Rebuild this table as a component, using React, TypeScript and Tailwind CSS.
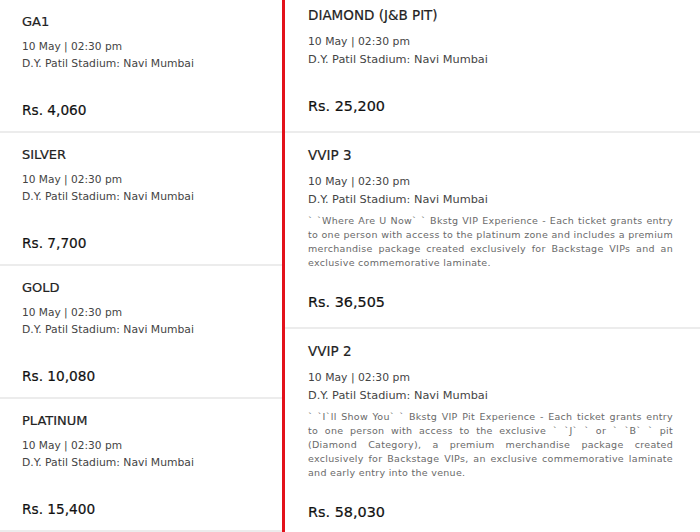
const VENUE = 'D.Y. Patil Stadium: Navi Mumbai';
const DATE = '10 May | 02:30 pm';

type Ticket = {
  name: string;
  price: string;
  lines?: string[];
};

const left: Ticket[] = [
  { name: 'GA1', price: 'Rs. 4,060' },
  { name: 'SILVER', price: 'Rs. 7,700' },
  { name: 'GOLD', price: 'Rs. 10,080' },
  { name: 'PLATINUM', price: 'Rs. 15,400' },
];

const right: Ticket[] = [
  { name: 'DIAMOND (J&B PIT)', price: 'Rs. 25,200' },
  {
    name: 'VVIP 3',
    price: 'Rs. 36,505',
    lines: [
      '` `Where Are U Now` ` Bkstg VIP Experience - Each ticket grants entry',
      'to one person with access to the platinum zone and includes a premium',
      'merchandise package created exclusively for Backstage VIPs and an',
      'exclusive commemorative laminate.',
    ],
  },
  {
    name: 'VVIP 2',
    price: 'Rs. 58,030',
    lines: [
      '` `I`ll Show You` ` Bkstg VIP Pit Experience - Each ticket grants entry',
      'to one person with access to the exclusive ` `J` ` or ` `B` ` pit',
      '(Diamond Category), a premium merchandise package created',
      'exclusively for Backstage VIPs, an exclusive commemorative laminate',
      'and early entry into the venue.',
    ],
  },
];

function LeftCard({ t }: { t: Ticket }) {
  return (
    <div className="border-b-2 border-[#ececec] px-[22px] pt-[13px] pb-[11px]">
      <div className="text-[13px] leading-[18px] text-[#222] [-webkit-text-stroke:0.2px]">{t.name}</div>
      <div className="mt-[6px] text-[10.6px] leading-[18px] text-[#444]">{DATE}</div>
      <div className="text-[10.8px] leading-[18px] text-[#444]">{VENUE}</div>
      <div className="mt-[27px] text-[13.7px] leading-[20px] text-[#111] [-webkit-text-stroke:0.2px]">
        {t.price}
      </div>
    </div>
  );
}

function RightCard({ t }: { t: Ticket }) {
  return (
    <div className="border-b-2 border-[#ececec] pl-[23px] pr-[27px] pt-[13px] pb-[15px]">
      <div className="text-[13.5px] leading-[18px] text-[#222] [-webkit-text-stroke:0.2px]">{t.name}</div>
      <div className="mt-[9px] text-[10.8px] leading-[18px] text-[#444]">{DATE}</div>
      <div className="text-[11.3px] leading-[18px] text-[#444]">{VENUE}</div>
      {t.lines && (
        <div className="mt-[5px] text-[9.5px] leading-[14px] tracking-[0.3px] text-[#6a6a6a]">
          {t.lines.map((l, i) => (
            <div
              key={i}
              className={i < t.lines!.length - 1 ? 'text-justify [text-align-last:justify]' : ''}
            >
              {l}
            </div>
          ))}
        </div>
      )}
      <div
        className={`${t.lines ? 'mt-[22px]' : 'mt-[27px]'} text-[14.4px] leading-[20px] text-[#111] [-webkit-text-stroke:0.2px]`}
      >
        {t.price}
      </div>
    </div>
  );
}

export default function App() {
  return (
    <div
      className="flex h-[532px] w-[700px] overflow-hidden bg-white"
      style={{ fontFamily: '"DejaVu Sans", sans-serif' }}
    >
      <div className="w-[282px] shrink-0">
        {left.map((t) => (
          <LeftCard key={t.name} t={t} />
        ))}
      </div>
      <div className="w-[3px] shrink-0 bg-[#e3111b]" />
      <div className="-mt-[7px] flex-1">
        {right.map((t) => (
          <RightCard key={t.name} t={t} />
        ))}
      </div>
    </div>
  );
}
